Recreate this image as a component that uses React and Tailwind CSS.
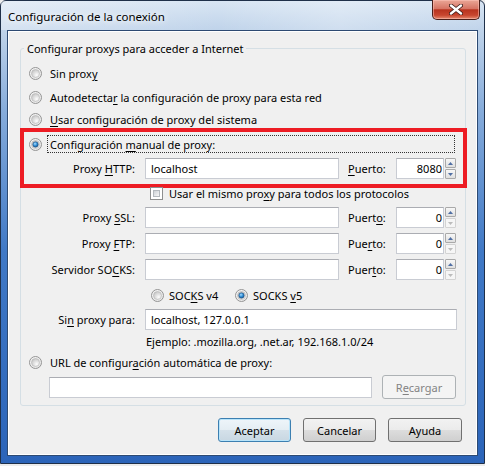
import React from "react";

// small Win7-ish controls
function Radio({ checked = false }) {
  return (
    <svg width="13" height="13" viewBox="0 0 13 13" className="shrink-0">
      <defs>
        <linearGradient id="rOuter" x1="0" y1="0" x2="1" y2="1">
          <stop offset="0" stopColor="#f7f7f7" />
          <stop offset="1" stopColor="#e4e4e4" />
        </linearGradient>
        <radialGradient id="rInner" cx="0.65" cy="0.7" r="0.75">
          <stop offset="0" stopColor="#fdfdfd" />
          <stop offset="1" stopColor="#c4c4c4" />
        </radialGradient>
        <radialGradient id="rDot" cx="0.4" cy="0.35" r="0.75">
          <stop offset="0" stopColor="#a8dcff" />
          <stop offset="0.5" stopColor="#2f8ed6" />
          <stop offset="1" stopColor="#17497d" />
        </radialGradient>
      </defs>
      <circle cx="6.5" cy="6.5" r="6" fill="url(#rOuter)" stroke="#949494" />
      <circle cx="6.5" cy="6.5" r="4" fill="url(#rInner)" stroke="#b5b5b5" strokeWidth="0.6" />
      {checked && <circle cx="6.5" cy="6.5" r="2.7" fill="url(#rDot)" stroke="#23507e" strokeWidth="0.6" />}
    </svg>
  );
}

function Checkbox() {
  return (
    <span className="w-[13px] h-[13px] border border-[#8e8f8f] bg-white p-[2px] shrink-0 flex">
      <span className="flex-1 border border-[#b4b9be] bg-[linear-gradient(135deg,#cdd1d6,#f7f7f7)]" />
    </span>
  );
}

function TextBox({ value, className = "" }) {
  return (
    <div className={`h-[21px] border border-[#c9ccd3] border-t-[#abadb3] bg-white flex items-center px-[5px] ${className}`}>
      {value}
    </div>
  );
}

function SpinBtn({ up, disabled }) {
  return (
    <div
      className={`h-[10px] w-[11px] border rounded-[1px] flex items-center justify-center ${
        disabled ? "border-[#d3d3d3] bg-[#f6f6f6]" : "border-[#a9a9a9] bg-[linear-gradient(#f7f7f7,#dfdfdf)]"
      }`}
    >
      <svg width="5" height="3" viewBox="0 0 5 3">
        <path d={up ? "M0 3 L2.5 0 L5 3Z" : "M0 0 L2.5 3 L5 0Z"} fill={disabled ? "#bcbcbc" : "#4f6ea3"} />
      </svg>
    </div>
  );
}

function PortBox({ value, downDisabled }) {
  return (
    <div className="flex items-center gap-[1px]">
      <div className="w-[48px] h-[21px] border border-[#c9ccd3] border-t-[#abadb3] bg-white flex items-center justify-end pr-[1px]">
        {value}
      </div>
      <div className="flex flex-col gap-[1px]">
        <SpinBtn up />
        <SpinBtn disabled={downDisabled} />
      </div>
    </div>
  );
}

function ProxyRow({ label, portLabel, value = "", port, labelW, mt, downDisabled }) {
  return (
    <div className={`flex items-center h-[21px] ${mt}`}>
      <div className={`${labelW} text-right`}>{label}</div>
      <TextBox className="ml-[10px] w-[194px]" value={value} />
      <div className="ml-[9px] w-[48px]">{portLabel}</div>
      <PortBox value={port} downDisabled={downDisabled} />
    </div>
  );
}

function Btn({ children, primary, disabled, className = "" }) {
  let look = "border-[#707070] bg-[linear-gradient(#f2f2f2,#ebebeb_50%,#dddddd_50%,#cfcfcf)]";
  if (primary)
    look =
      "border-[#3c7fb1] shadow-[inset_0_0_0_1px_#b8e4fa] bg-[linear-gradient(#eef5fa,#e4edf3_50%,#d5e1ea_50%,#c8d7e2)]";
  if (disabled) look = "border-[#adb2b5] bg-[#f4f4f4] text-[#838383]";
  return (
    <div className={`h-[24px] border rounded-[3px] flex items-center justify-center ${look} ${className}`}>
      {children}
    </div>
  );
}

const U = ({ children }) => <u className="underline underline-offset-[2px]">{children}</u>;

export default function App() {
  return (
    <div className="w-[485px] h-[466px] bg-[#ececec] text-[11px] leading-[15px] text-black font-['Noto_Sans','Liberation_Sans',sans-serif]">
      <div className="h-[464px] flex flex-col border border-[#1f3049] rounded-t-[6px] bg-[linear-gradient(180deg,#d8e5f3_0px,#bfd3ea_30px,#86acdb_110px,#4079c6_250px,#2b64b9_464px)]">
        {/* title bar */}
        <div className="h-[29px] flex justify-between bg-[linear-gradient(90deg,rgba(255,255,255,0.35),rgba(255,255,255,0)_45%,rgba(255,255,255,0.25)_70%,rgba(255,255,255,0))]">
          <div className="pl-[7px] pt-[8px] text-[11.5px] [text-shadow:0_0_6px_#fff,0_0_10px_#fff]">
            Configuración de la conexión
          </div>
          <div className="mr-[4px] -mt-[1px] w-[48px] h-[20px] rounded-b-[5px] border border-[#4a1f1a] border-t-0 flex items-center justify-center shadow-[inset_0_0_0_1px_rgba(255,200,190,0.5)] bg-[linear-gradient(#eaa797,#d67565_45%,#b8331f_52%,#c8462f_80%,#e58a6f)]">
            <svg width="14" height="11" viewBox="0 0 14 11">
              <path d="M2 1.5 L12 9.5 M12 1.5 L2 9.5" stroke="#3a1a16" strokeWidth="4" strokeLinecap="round" />
              <path d="M2 1.5 L12 9.5 M12 1.5 L2 9.5" stroke="#ffffff" strokeWidth="2.4" strokeLinecap="round" />
            </svg>
          </div>
        </div>

        {/* client area */}
        <div className="flex-1 mx-[6px] mb-[7px] border border-[#2d4a72] bg-[#f0f0f0] flex flex-col shadow-[inset_0_0_0_1px_#ffffff]">
          <fieldset className="mt-[10px] ml-[12px] mr-[11px] border border-[#d5dfe5] rounded-[3px] pb-[6px] flex flex-col">
            <legend className="ml-[3px] px-[3px] leading-[15px]">Configurar proxys para acceder a Internet</legend>

            <div className="mt-[8px] h-[18px] flex items-center gap-[8px] ml-[8px]">
              <Radio />
              <span>
                Sin prox<U>y</U>
              </span>
            </div>
            <div className="mt-[6px] h-[18px] flex items-center gap-[8px] ml-[8px]">
              <Radio />
              <span>
                Autodetecta<U>r</U> la configuración de proxy para esta red
              </span>
            </div>
            <div className="mt-[5px] h-[17px] flex items-center gap-[8px] ml-[8px]">
              <Radio />
              <span>
                <U>U</U>sar configuración de proxy del sistema
              </span>
            </div>

            {/* highlighted manual block */}
            <div className="-ml-[1px] -mr-[2px] border-4 border-[#ed1c24] pb-[5px] flex flex-col">
              <div className="mt-[3px] h-[18px] flex items-center ml-[5px] mr-[8px]">
                <Radio checked />
                <div className="ml-[5px] flex-1 h-[18px] border border-dotted border-[#333] pl-[2px] flex items-center">
                  <span>
                    Configuración <U>m</U>anual de proxy:
                  </span>
                </div>
              </div>
              <ProxyRow
                mt="mt-[5px]"
                labelW="w-[111px]"
                label={
                  <>
                    Proxy <U>H</U>TTP:
                  </>
                }
                value="localhost"
                portLabel={
                  <>
                    <U>P</U>uerto:
                  </>
                }
                port="8080"
              />
            </div>

            <div className="-mt-[1px] h-[13px] flex items-center gap-[6px] ml-[129px]">
              <Checkbox />
              <span>
                Usar el mismo pro<U>x</U>y para todos los protocolos
              </span>
            </div>

            <ProxyRow
              mt="mt-[7px]"
              labelW="w-[114px]"
              label={
                <>
                  Proxy <U>S</U>SL:
                </>
              }
              portLabel={
                <>
                  Puert<U>o</U>:
                </>
              }
              port="0"
              downDisabled
            />
            <ProxyRow
              mt="mt-[5px]"
              labelW="w-[114px]"
              label={
                <>
                  Proxy <U>F</U>TP:
                </>
              }
              portLabel={
                <>
                  Pue<U>r</U>to:
                </>
              }
              port="0"
              downDisabled
            />
            <ProxyRow
              mt="mt-[5px]"
              labelW="w-[114px]"
              label={
                <>
                  Servidor SO<U>C</U>KS:
                </>
              }
              portLabel={
                <>
                  Puer<U>t</U>o:
                </>
              }
              port="0"
              downDisabled
            />

            <div className="mt-[9px] h-[13px] flex items-center ml-[130px]">
              <div className="w-[84px] flex items-center gap-[5px]">
                <Radio />
                <span>
                  SOC<U>K</U>S v4
                </span>
              </div>
              <div className="flex items-center gap-[5px]">
                <Radio checked />
                <span>
                  SOCKS <U>v</U>5
                </span>
              </div>
            </div>

            <div className="mt-[7px] h-[21px] flex items-center">
              <div className="w-[114px] text-right">
                Si<U>n</U> proxy para:
              </div>
              <TextBox className="ml-[10px] w-[312px]" value="localhost, 127.0.0.1" />
            </div>

            <div className="mt-[4px] h-[15px] ml-[125px]">Ejemplo: .mozilla.org, .net.ar, 192.168.1.0/24</div>

            <div className="mt-[6px] h-[15px] flex items-center gap-[8px] ml-[8px]">
              <Radio />
              <span>
                URL de configur<U>a</U>ción automática de proxy:
              </span>
            </div>

            <div className="mt-[5px] h-[24px] flex items-center ml-[28px]">
              <TextBox className="w-[323px] h-[20px]" />
              <Btn disabled className="ml-[10px] w-[74px]">
                <span>
                  R<U>e</U>cargar
                </span>
              </Btn>
            </div>
          </fieldset>

          <div className="mt-[12px] mr-[15px] flex justify-end gap-[12px]">
            <Btn primary className="w-[73px]">
              Aceptar
            </Btn>
            <Btn className="w-[73px]">Cancelar</Btn>
            <Btn className="w-[74px]">Ayuda</Btn>
          </div>
        </div>
      </div>
    </div>
  );
}
